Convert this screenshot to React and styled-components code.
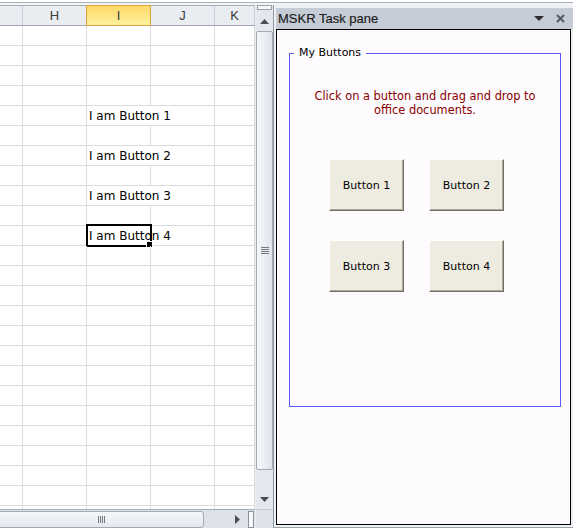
import React from 'react';
import styled, { createGlobalStyle } from 'styled-components';

const GlobalStyle = createGlobalStyle`
  html, body {
    margin: 0;
    padding: 0;
    background: #ffffff;
  }
  body {
    font-family: "DejaVu Sans", sans-serif;
  }
`;

const Window = styled.div`
  width: 573px;
  height: 528px;
  overflow: hidden;
  display: flex;
  flex-direction: column;
  background: #ffffff;
`;

const TopStrip = styled.div`
  height: 2px;
  margin-top: 2px;
  border-top: 1px solid #aab1bb;
  background: #f3f4f7;
`;

const Main = styled.div`
  flex: 1;
  min-height: 0;
  display: flex;
`;

/* ---------- spreadsheet ---------- */

const Sheet = styled.div`
  width: 255px;
  display: flex;
  flex-direction: column;
`;

const HeaderRow = styled.div`
  display: grid;
  grid-template-columns: 23px 64px 64px 64px 1fr;
  height: 21px;
  box-sizing: border-box;
  border-top: 1px solid #a3abb6;
  border-bottom: 1px solid #9ea6b1;
  background: #e9ecf1;
`;

const HeaderCell = styled.div`
  position: relative;
  box-sizing: border-box;
  display: flex;
  align-items: center;
  justify-content: center;
  font-family: "Liberation Sans", sans-serif;
  font-size: 13px;
  color: #3a3a3a;
  border-right: 1px solid #c9ced6;
  background: ${(p) => (p.$active ? 'linear-gradient(#fdd96a, #fff19c)' : 'transparent')};
  ${(p) =>
    p.$active &&
    `
    margin: -1px 0 -1px -1px;
    border: 1px solid #e0a23d;
    z-index: 1;
  `}
`;

const Body = styled.div`
  flex: 1;
  min-height: 0;
  overflow: hidden;
`;

const Row = styled.div`
  display: grid;
  grid-template-columns: 23px 64px 64px 64px 1fr;
  height: 20px;
  box-sizing: border-box;
  border-bottom: 1px solid #dadcdd;
`;

const Cell = styled.div`
  position: relative;
  box-sizing: border-box;
  border-right: 1px solid #dadcdd;
  grid-column: span ${(p) => p.$span || 1};
  padding: 2px 0 0 2px;
  font-size: 12px;
  line-height: 17px;
  color: #000;
  white-space: nowrap;
`;

const Selection = styled.div`
  position: absolute;
  left: -1px;
  top: -2px;
  width: 66px;
  height: 23px;
  box-sizing: border-box;
  border: 2px solid #000;
  pointer-events: none;
`;

const FillHandle = styled.div`
  position: absolute;
  right: -2px;
  bottom: -2px;
  width: 5px;
  height: 5px;
  background: #000;
  box-shadow: 0 0 0 1px #fff;
`;

const HScroll = styled.div`
  height: 19px;
  box-sizing: border-box;
  border-top: 1px solid #a6adb7;
  background: #dde2e9;
  display: flex;
  align-items: center;
`;

const HThumb = styled.div`
  width: 205px;
  height: 17px;
  box-sizing: border-box;
  margin-left: -1px;
  border: 1px solid #a2a9b3;
  border-radius: 0 3px 3px 0;
  background: linear-gradient(#f6f7f9, #e4e8ee);
  display: flex;
  align-items: center;
  justify-content: center;
`;

const GripV = styled.div`
  width: 7px;
  height: 7px;
  background: repeating-linear-gradient(90deg, #727983 0 1px, transparent 1px 2px);
`;

const HArrow = styled.div`
  margin-left: auto;
  width: 8px;
  display: flex;
  justify-content: center;
`;

const HSplit = styled.div`
  margin: 0 1px 0 7px;
  width: 4px;
  height: 15px;
  border: 1px solid #8a919b;
  background: #f7f8fa;
`;

/* ---------- vertical scroll bar ---------- */

const VScroll = styled.div`
  width: 18px;
  display: flex;
  flex-direction: column;
  background: #e4e8ee;
  border-left: 1px solid #e9ecf0;
  box-sizing: border-box;
`;

const VSplit = styled.div`
  height: 5px;
  margin: 0 1px 1px;
  box-sizing: border-box;
  border: 1px solid #9aa1ab;
  background: #f7f8fa;
`;

const VArrow = styled.div`
  height: ${(p) => p.$h}px;
  display: flex;
  align-items: center;
  justify-content: center;
`;

const VThumb = styled.div`
  height: 439px;
  box-sizing: border-box;
  border: 1px solid #a2a9b3;
  border-radius: 2px;
  background: linear-gradient(90deg, #f6f7f9, #dfe4ea);
  display: flex;
  align-items: center;
  justify-content: center;
`;

const GripH = styled.div`
  width: 8px;
  height: 7px;
  background: repeating-linear-gradient(180deg, #727983 0 1px, transparent 1px 2px);
`;

const VTrack = styled.div`
  height: 20px;
`;

const Corner = styled.div`
  height: 19px;
  box-sizing: border-box;
  border-top: 1px solid #c5cad2;
  background: #dde2e9;
`;

/* ---------- task pane ---------- */

const Pane = styled.div`
  width: 300px;
  box-sizing: border-box;
  display: flex;
  flex-direction: column;
  border-left: 1px solid #8f96a0;
  border-bottom: 1px solid #9aa1ab;
  padding: 3px 0 2px 2px;
  background: #eef0f4;
`;

const TitleBar = styled.div`
  height: 21px;
  display: flex;
  align-items: center;
  padding-left: 2px;
  background: #c6ccd6;
`;

const Title = styled.span`
  flex: 1;
  font-family: "Liberation Sans", sans-serif;
  font-size: 13px;
  color: #1f1f1f;
  -webkit-text-stroke: 0.2px #1f1f1f;
`;

const TitleIcon = styled.span`
  display: flex;
  align-items: center;
  margin-right: ${(p) => p.$mr}px;
`;

const Content = styled.div`
  flex: 1;
  margin-right: 2px;
  border: 1px solid #000;
  background: #fdfbfe;
  padding: 16px 9px 0 12px;
`;

const Group = styled.fieldset`
  margin: 0;
  padding: 29px 0 0 0;
  height: 361px;
  box-sizing: border-box;
  border: 1px solid #5a5af7;
  min-width: 0;
`;

const Legend = styled.legend`
  margin-left: 4px;
  padding: 0 5px;
  font-size: 11px;
  line-height: 14px;
  color: #000;
`;

const Hint = styled.p`
  margin: 0;
  text-align: center;
  font-size: 11.4px;
  line-height: 14px;
  color: #8a0000;
`;

const ButtonGrid = styled.div`
  display: grid;
  grid-template-columns: repeat(2, 75px);
  column-gap: 25px;
  row-gap: 29px;
  margin-top: 42px;
  padding-left: 39px;
`;

const DragButton = styled.button`
  width: 75px;
  height: 52px;
  padding: 0;
  font-family: "DejaVu Sans", sans-serif;
  font-size: 11px;
  color: #000;
  background: #eeebe0;
  border: none;
  border-top: 1px solid #ffffff;
  border-left: 1px solid #ffffff;
  border-right: 1px solid #716f64;
  border-bottom: 1px solid #716f64;
  box-shadow: inset -1px -1px 0 #aca899;
  cursor: pointer;
`;

const columns = ['', 'H', 'I', 'J', 'K'];
const textRows = { 4: 'I am Button 1', 6: 'I am Button 2', 8: 'I am Button 3', 10: 'I am Button 4' };

const Triangle = ({ dir, w, h, color }) => {
  const pts = {
    up: `0,${h} ${w / 2},0 ${w},${h}`,
    down: `0,0 ${w},0 ${w / 2},${h}`,
    right: `0,0 ${w},${h / 2} 0,${h}`,
  }[dir];
  return (
    <svg width={w} height={h} viewBox={`0 0 ${w} ${h}`}>
      <polygon points={pts} fill={color} />
    </svg>
  );
};

const SheetRow = ({ index }) => {
  const text = textRows[index];
  if (!text) {
    return (
      <Row>
        {columns.map((c) => (
          <Cell key={c} />
        ))}
      </Row>
    );
  }
  return (
    <Row>
      <Cell />
      <Cell />
      <Cell $span={2}>
        {text}
        {index === 10 && (
          <Selection>
            <FillHandle />
          </Selection>
        )}
      </Cell>
      <Cell />
    </Row>
  );
};

export default function App() {
  const rows = Array.from({ length: 25 }, (_, i) => i);
  return (
    <>
      <GlobalStyle />
      <Window>
        <TopStrip />
        <Main>
          <Sheet>
            <HeaderRow>
              {columns.map((c) => (
                <HeaderCell key={c || 'x'} $active={c === 'I'}>
                  {c}
                </HeaderCell>
              ))}
            </HeaderRow>
            <Body>
              {rows.map((i) => (
                <SheetRow key={i} index={i} />
              ))}
            </Body>
            <HScroll>
              <HThumb>
                <GripV />
              </HThumb>
              <HArrow>
                <Triangle dir="right" w={5} h={9} color="#4a4f57" />
              </HArrow>
              <HSplit />
            </HScroll>
          </Sheet>

          <VScroll>
            <VSplit />
            <VArrow $h={20}>
              <Triangle dir="up" w={9} h={5} color="#4a4f57" />
            </VArrow>
            <VThumb>
              <GripH />
            </VThumb>
            <VTrack />
            <VArrow $h={19}>
              <Triangle dir="down" w={9} h={5} color="#4a4f57" />
            </VArrow>
            <Corner />
          </VScroll>

          <Pane>
            <TitleBar>
              <Title>MSKR Task pane</Title>
              <TitleIcon $mr={12}>
                <Triangle dir="down" w={10} h={5} color="#2e2e2e" />
              </TitleIcon>
              <TitleIcon $mr={8}>
                <svg width="9" height="9" viewBox="0 0 9 9">
                  <path d="M1 1 L8 8 M8 1 L1 8" stroke="#555a61" strokeWidth="2" />
                </svg>
              </TitleIcon>
            </TitleBar>
            <Content>
              <Group>
                <Legend>My Buttons</Legend>
                <Hint>
                  Click on a button and drag and drop to
                  <br />
                  office documents.
                </Hint>
                <ButtonGrid>
                  <DragButton>Button 1</DragButton>
                  <DragButton>Button 2</DragButton>
                  <DragButton>Button 3</DragButton>
                  <DragButton>Button 4</DragButton>
                </ButtonGrid>
              </Group>
            </Content>
          </Pane>
        </Main>
      </Window>
    </>
  );
}
